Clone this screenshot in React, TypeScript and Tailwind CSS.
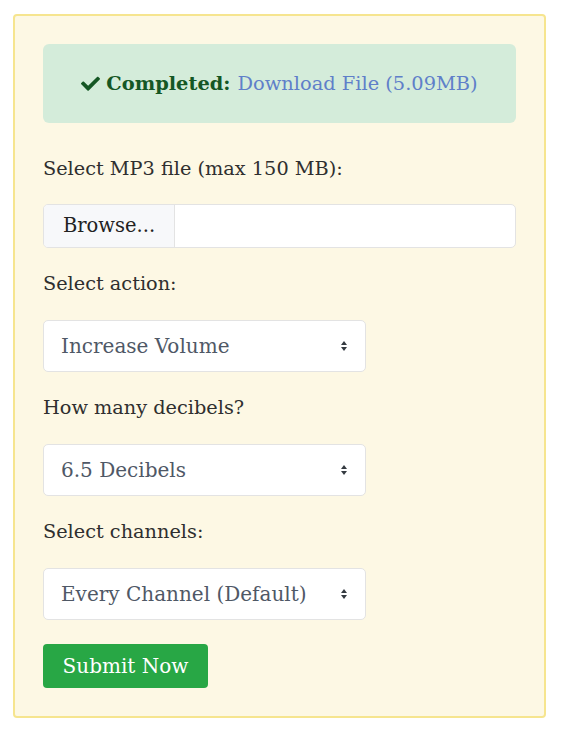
import React from 'react';

const font = { fontFamily: '"DejaVu Serif", serif' };

const SelectArrows: React.FC = () => (
  <svg width="8" height="12" viewBox="0 0 8 12" className="pointer-events-none absolute right-[18px] top-1/2 -translate-y-1/2">
    <path d="M4 1 L7 5 H1 Z" fill="#343a40" />
    <path d="M4 11 L7 7 H1 Z" fill="#343a40" />
  </svg>
);

const FakeSelect: React.FC<{ value: string }> = ({ value }) => (
  <div className="relative w-[323px]">
    <select
      defaultValue={value}
      className="h-[52px] w-full appearance-none rounded-[5px] border border-[#e3e3e3] bg-white pl-[17px] pr-10 text-[20px] text-[#4f5866] outline-none"
    >
      <option>{value}</option>
    </select>
    <SelectArrows />
  </div>
);

const Label: React.FC<{ children: React.ReactNode }> = ({ children }) => (
  <label className="block text-[19.3px] leading-[24px] text-[#2f2f2f]">{children}</label>
);

export default function App() {
  return (
    <div className="min-h-screen bg-white px-[13px] pt-[14px]" style={font}>
      <div className="h-[704px] w-[533px] rounded-[4px] border-2 border-[#f6e58f] bg-[#fdf8e4] px-[28px] pt-[28px]">
        {/* Status alert */}
        <div className="flex h-[79px] items-center justify-center rounded-[6px] bg-[#d4ecda] text-[19.4px]">
          <svg width="19" height="15" viewBox="0 0 512 400" className="mr-[6px]">
            <path
              fill="#155724"
              d="M173.9 389.1L7.5 222.7c-10-10-10-26.2 0-36.2l36.2-36.2c10-10 26.2-10 36.2 0L192 262.4 432.1 22.3c10-10 26.2-10 36.2 0l36.2 36.2c10 10 10 26.2 0 36.2L210.1 389.1c-10 10-26.2 10-36.2 0z"
            />
          </svg>
          <span className="font-bold text-[#155724]">Completed:</span>
          <a href="#" className="ml-[7px] text-[#5f7fc9]">Download File (5.09MB)</a>
        </div>

        <div className="mt-[34px]">
          <Label>Select MP3 file (max 150 MB):</Label>
        </div>
        <div className="mt-[23px] flex h-[44px] w-[473px] overflow-hidden rounded-[5px] border border-[#e3e3e3] bg-white">
          <div className="flex w-[131px] items-center justify-center border-r border-[#e3e3e3] bg-[#f7f8fa] text-[19.5px] text-[#222]">
            Browse...
          </div>
          <div className="flex-1" />
        </div>

        <div className="mt-[24px]">
          <Label>Select action:</Label>
        </div>
        <div className="mt-[24px]">
          <FakeSelect value="Increase Volume" />
        </div>

        <div className="mt-[24px]">
          <Label>How many decibels?</Label>
        </div>
        <div className="mt-[24px]">
          <FakeSelect value="6.5 Decibels" />
        </div>

        <div className="mt-[24px]">
          <Label>Select channels:</Label>
        </div>
        <div className="mt-[24px]">
          <FakeSelect value="Every Channel (Default)" />
        </div>

        <button className="mt-[24px] h-[44px] w-[165px] rounded-[4px] bg-[#28a745] text-[20px] text-white">
          Submit Now
        </button>
      </div>
    </div>
  );
}
